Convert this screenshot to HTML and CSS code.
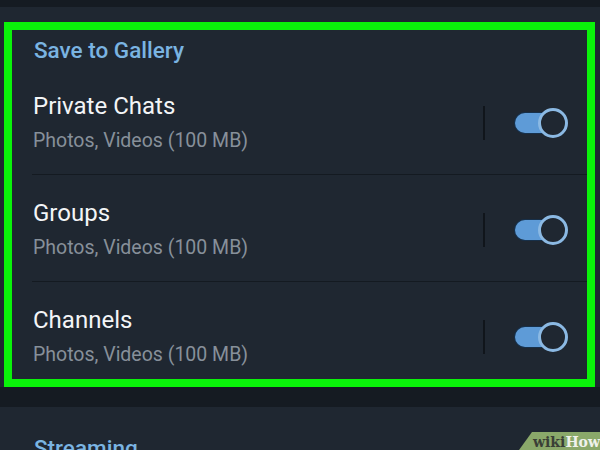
FILE: index.html
```html
<!DOCTYPE html>
<html lang="en">
<head>
    <meta charset="UTF-8">
    <meta name="viewport" content="width=device-width, initial-scale=1.0">
    <title>Save to Gallery</title>
    <link rel="stylesheet" href="styles.css">
</head>
<body>
    <div class="topbar"></div>

    <section class="panel">
        <div class="highlight">
            <h2 class="section-title">Save to Gallery</h2>

            <div class="row">
                <div class="row-text">
                    <div class="row-title">Private Chats</div>
                    <div class="row-sub">Photos, Videos (100 MB)</div>
                </div>
                <span class="sep"></span>
                <span class="toggle"><span class="track"></span><span class="knob"></span></span>
            </div>

            <div class="row">
                <div class="row-text">
                    <div class="row-title">Groups</div>
                    <div class="row-sub">Photos, Videos (100 MB)</div>
                </div>
                <span class="sep"></span>
                <span class="toggle"><span class="track"></span><span class="knob"></span></span>
            </div>

            <div class="row">
                <div class="row-text">
                    <div class="row-title">Channels</div>
                    <div class="row-sub">Photos, Videos (100 MB)</div>
                </div>
                <span class="sep"></span>
                <span class="toggle"><span class="track"></span><span class="knob"></span></span>
            </div>
        </div>
    </section>

    <div class="gap"></div>

    <section class="panel next">
        <h2 class="section-title">Streaming</h2>
    </section>

    <div class="watermark"><span class="wiki">wiki</span><span class="how">How</span></div>
</body>
</html>
```

FILE: styles.css
```css
body {
    margin: 0;
    padding: 0;
    background-color: #1f2731;
    font-family: Roboto, "Noto Sans", sans-serif;
    height: 450px;
    overflow: hidden;
}

.topbar {
    height: 7px;
    background-color: #151b22;
}

.panel {
    background-color: #1f2731;
    padding: 15px 5px 0 4px;
}

.highlight {
    border: 8px solid #0af20a;
    padding-top: 8px;
}

.section-title {
    margin: 0 0 6px 22px;
    font-size: 22.5px;
    line-height: 24px;
    font-weight: 500;
    color: #7ab4e2;
}

.row {
    display: flex;
    align-items: center;
    margin-left: 20px;
    padding: 25px 19px 21px 1px;
    border-bottom: 1px solid #141a21;
}

.row:last-child {
    border-bottom: none;
    padding-bottom: 12px;
}

.row-text {
    flex: 1;
}

.row-title {
    font-size: 24px;
    line-height: 26px;
    color: #f3f5f7;
}

.row-sub {
    margin-top: 10px;
    font-size: 19.5px;
    line-height: 24px;
    color: #87909a;
}

.sep {
    width: 2px;
    height: 34px;
    background-color: #10151b;
    margin-right: 30px;
}

.toggle {
    position: relative;
    display: block;
    width: 53px;
    height: 30px;
}

.track {
    position: absolute;
    left: 0;
    top: 5px;
    width: 44px;
    height: 20px;
    border-radius: 10px;
    background-color: #5e9bd7;
    box-shadow: 0 0 0 1px #17304a;
}

.knob {
    position: absolute;
    right: 0;
    top: 0;
    width: 24px;
    height: 24px;
    border-radius: 50%;
    border: 3px solid #8bb9e3;
    background-color: #1f2731;
}

.gap {
    height: 20px;
    background-color: #151b22;
}

.next {
    padding-top: 29px;
}

.next .section-title {
    margin-left: 30px;
}

.watermark {
    position: absolute;
    right: 0;
    top: 432px;
    width: 67px;
    height: 18px;
    padding-left: 14px;
    background-color: #8aa86a;
    clip-path: polygon(13px 0, 100% 0, 100% 100%, 0 100%);
    font-family: "DejaVu Serif", "Liberation Serif", serif;
    font-weight: bold;
    font-size: 14px;
    line-height: 20px;
}

.wiki {
    color: #3a3f36;
}

.how {
    color: #f0f2ec;
}
```
